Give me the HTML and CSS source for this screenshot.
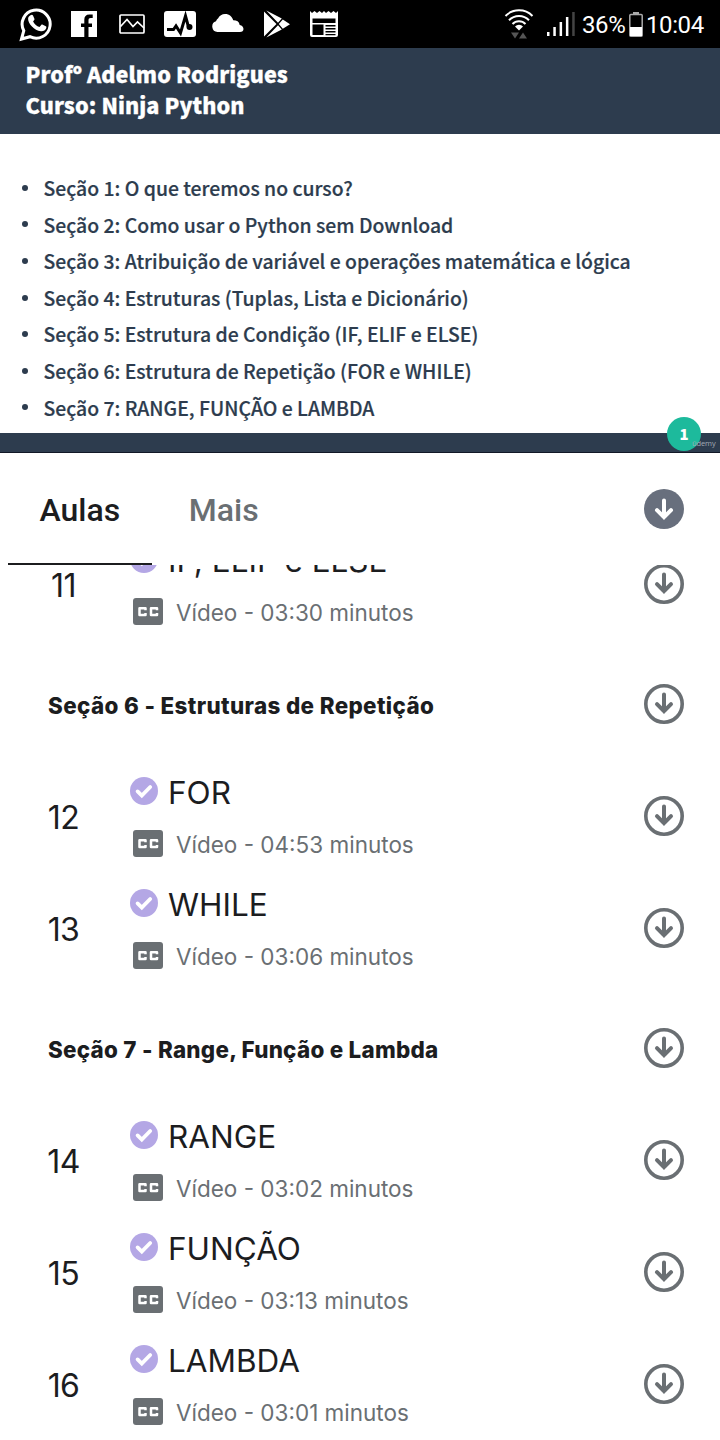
FILE: index.html
```html
<!DOCTYPE html>
<html lang="pt-BR">
<head>
<meta charset="utf-8">
<title>Ninja Python</title>
<link rel="stylesheet" href="styles.css">
</head>
<body>
<svg width="0" height="0" class="defs">
  <defs>
    <symbol id="down" viewBox="0 0 40 40"><circle cx="20" cy="20" r="18.2" fill="none" stroke="#6a6f73" stroke-width="3.6"/><path d="M20 10.500V27M13 20.200l7 7 7-7" fill="none" stroke="#6a6f73" stroke-width="4" stroke-linecap="round"/></symbol>
    <symbol id="check" viewBox="0 0 28 28"><circle cx="14" cy="14" r="14" fill="#b4a7e5"/><path d="M7.600 14.400l4.200 4.200 8.400-8.600" fill="none" stroke="#fff" stroke-width="3.800" stroke-linecap="round"/></symbol>
    <symbol id="cc" viewBox="0 0 30 27"><rect width="30" height="27" rx="3" fill="#6a6f73"/><path d="M12.500 12.300V10.300H6.500v6.800H12.500v-2M24 12.300V10.300H18v6.800H24v-2" fill="none" stroke="#fff" stroke-width="2.500" stroke-linejoin="round"/></symbol>
  </defs>
</svg>
<header class="status">
  <div class="status-icons">
    <svg width="34" height="36" viewBox="0 0 34 36"><path d="M2.500 33l2.300-8.300A14 14 0 1 1 11 30.700z" fill="none" stroke="#fff" stroke-width="3"/><path d="M11.500 9.200c1-.8 2-.7 2.500.3l1.400 3.200c.3.800-.2 1.400-1.300 2.700 1.600 2.900 3.500 4.400 6.400 5.600l1.700-2c.5-.6 1-.6 1.600-.3l3 1.500c.7.400.7.900.4 2-.7 2.300-3.200 3.300-5.300 3-6.700-1-12.800-7.500-12.800-12.300 0-1.500.9-2.800 2.400-3.700z" fill="#fff"/></svg>
    <svg width="26" height="26" viewBox="0 0 26 26"><path fill="#fff" d="M0 0h26v26H17.500V16h3.500v-3.500h-3.500V9.500c0-1.800.6-2.500 2.200-2.500h2V3.500h-3.300c-3.400 0-5.100 2-5.100 5.300V12.500H10V16h3.300V26H0z"/></svg>
    <svg width="26" height="20" viewBox="0 0 26 20"><rect x="1" y="1" width="24" height="18" rx="1" fill="none" stroke="#fff" stroke-width="1.700"/><path d="M1.500 12.500L8 5.500l6 7 4.500-4.500 6.500 6" fill="none" stroke="#fff" stroke-width="1.700"/></svg>
    <svg width="32" height="26" viewBox="0 0 32 26"><rect width="32" height="26" rx="3" fill="#fff"/><path d="M3 18.500h6.500l2.500-3.500 4.500 7 5-17 3 11" fill="none" stroke="#000" stroke-width="3"/><circle cx="25.500" cy="16" r="3"/></svg>
    <svg width="32" height="18" viewBox="0 0 32 18"><path fill="#fff" d="M5.500 18A5.500 5.500 0 0 1 4 7.300C4.800 5.500 5 5 6 4.500 7.500 1.500 10 0 13 0c4.500 0 7 2.500 8.300 6.300 3.500 0 5.900 1.400 6.400 4.700 5 1 5 7 .2 7z"/></svg>
    <svg width="26" height="28" viewBox="0 0 26 28"><path d="M0 1.500L12.500 14 0 26.500zM2.300.5l15.500 8-3.800 4.200zM2.300 27.500l15.500-8-3.800-4.200zM18.800 9.500l7.200 4.700-7.200 4.500-4-4.600z" fill="#fff"/></svg>
    <svg width="28" height="27" viewBox="0 0 28 27"><path fill="#fff" fill-rule="evenodd" d="M0 0l2 2 2.500-2L7 2l2.500-2L12 2l2-2 2 2 2.500-2L21 2l2.500-2L26 2l2-2v24a2 2 0 0 1-2 2H2a2 2 0 0 1-2-2zM2.500 7.500v4.500h23V7.500zM2.500 13.500v10.500H13.500V13.500zM15.500 14v1.500h10V14zM15.500 17v1.500h10V17zM15.500 20v1.500h10V20zM15.500 23v1.200h10V23z"/></svg>
  </div>
  <svg class="wifi" width="30" height="32" viewBox="0 0 30 32"><g fill="none" stroke="#fff" stroke-width="2"><path d="M1.500 8a19 19 0 0 1 27 0M5 12.300a14 14 0 0 1 20 0M8.500 16a9 9 0 0 1 13 0"/></g><path d="M11 18.500a5.500 5.500 0 0 1 8 0L15 22.500z" fill="#fff"/><path d="M7 24.500h8l-4 6zM15 30.500h8l-4-6z" fill="#555"/></svg>
  <svg class="signal" width="28" height="24" viewBox="0 0 28 24"><path d="M0 20h2.500v4H0zM6.300 15h2.500v9H6.300zM12.600 10h2.500v14h-2.500zM18.900 5h2.500v19h-2.500z" fill="#fff"/><path d="M25.200 0h2.500v24h-2.500z" fill="#444"/></svg>
  <span class="pct">36%</span>
  <svg class="battery" width="14" height="25" viewBox="0 0 14 25"><path d="M4 0h6v2H4z" fill="#aaa"/><rect x=".8" y="2.500" width="12.400" height="21.700" rx="1" fill="none" stroke="#aaa" stroke-width="1.500"/><path d="M1 15h12v9H1z" fill="#fff"/></svg>
  <span class="time">10:04</span>
</header>
<section class="slide">
  <div class="slide-head"><div class="l1">Profº Adelmo Rodrigues</div><div class="l2">Curso: Ninja Python</div></div>
  <ul class="topics">
    <li>Seção 1: O que teremos no curso?</li>
    <li>Seção 2: Como usar o Python sem Download</li>
    <li>Seção 3: Atribuição de variável e operações matemática e lógica</li>
    <li>Seção 4: Estruturas (Tuplas, Lista e Dicionário)</li>
    <li>Seção 5: Estrutura de Condição (IF, ELIF e ELSE)</li>
    <li>Seção 6: Estrutura de Repetição (FOR e WHILE)</li>
    <li>Seção 7: RANGE, FUNÇÃO e LAMBDA</li>
  </ul>
  <div class="slide-foot"><span class="page">1</span><span class="brand">ûdemy</span></div>
</section>
<nav class="tabs">
  <div class="tab active"><span>Aulas</span></div>
  <div class="tab"><span>Mais</span></div>
  <svg class="dl-all" width="40" height="40" viewBox="0 0 40 40"><circle cx="20" cy="20" r="20" fill="#686f7d"/><path d="M20 11.500V28M13 21.200l7 7 7-7" fill="none" stroke="#fff" stroke-width="4" stroke-linecap="round"/></svg>
</nav>
<main class="list">
  <div class="scroll">
    <div class="row"><span class="num">11</span><div class="body"><div class="title"><svg class="check"><use href="#check"/></svg><span>IF, ELIF e ELSE</span></div><div class="meta"><svg class="cc"><use href="#cc"/></svg><span>Vídeo - 03:30 minutos</span></div></div><svg class="dl"><use href="#down"/></svg></div>
    <div class="sec"><h2 class="s6">Seção 6 - Estruturas de Repetição</h2><svg class="dl"><use href="#down"/></svg></div>
    <div class="row"><span class="num">12</span><div class="body"><div class="title"><svg class="check"><use href="#check"/></svg><span>FOR</span></div><div class="meta"><svg class="cc"><use href="#cc"/></svg><span>Vídeo - 04:53 minutos</span></div></div><svg class="dl"><use href="#down"/></svg></div>
    <div class="row"><span class="num">13</span><div class="body"><div class="title"><svg class="check"><use href="#check"/></svg><span>WHILE</span></div><div class="meta"><svg class="cc"><use href="#cc"/></svg><span>Vídeo - 03:06 minutos</span></div></div><svg class="dl"><use href="#down"/></svg></div>
    <div class="sec"><h2 class="s7">Seção 7 - Range, Função e Lambda</h2><svg class="dl"><use href="#down"/></svg></div>
    <div class="row"><span class="num">14</span><div class="body"><div class="title"><svg class="check"><use href="#check"/></svg><span>RANGE</span></div><div class="meta"><svg class="cc"><use href="#cc"/></svg><span>Vídeo - 03:02 minutos</span></div></div><svg class="dl"><use href="#down"/></svg></div>
    <div class="row"><span class="num">15</span><div class="body"><div class="title"><svg class="check"><use href="#check"/></svg><span>FUNÇÃO</span></div><div class="meta"><svg class="cc"><use href="#cc"/></svg><span>Vídeo - 03:13 minutos</span></div></div><svg class="dl"><use href="#down"/></svg></div>
    <div class="row"><span class="num">16</span><div class="body"><div class="title"><svg class="check"><use href="#check"/></svg><span>LAMBDA</span></div><div class="meta"><svg class="cc"><use href="#cc"/></svg><span>Vídeo - 03:01 minutos</span></div></div><svg class="dl"><use href="#down"/></svg></div>
  </div>
</main>
</body>
</html>
```
FILE: styles.css
```css
* { box-sizing: border-box; }
body { margin: 0; width: 720px; height: 1440px; overflow: hidden; background: #fff; color: #1c1d1f; font-family: Inter, sans-serif; display: flex; flex-direction: column; }
svg { display: block; flex: none; }
.defs { position: absolute; }
span, h2 { white-space: nowrap; }

.status { height: 48px; flex: none; background: #000; color: #fff; display: flex; align-items: center; padding: 0 15px 0 19px; font: 24px/48px Roboto, sans-serif; }
.status-icons { display: flex; align-items: center; flex: 1; }
.status-icons svg:nth-child(1) { margin: -1px 18px 0 0; }
.status-icons svg:nth-child(2) { margin-right: 22px; }
.status-icons svg:nth-child(3) { margin-right: 19px; }
.status-icons svg:nth-child(4) { margin-right: 16px; }
.status-icons svg:nth-child(5) { margin: -2px 20px 0 0; }
.status-icons svg:nth-child(6) { margin-right: 20px; }
.wifi { margin-right: 13px; }
.signal { margin-right: 7px; }
.pct { width: 46px; letter-spacing: -0.4px; padding-top: 2px; }
.battery { margin: 0 3px 0 1px; }
.time { padding-top: 2px; width: 59px; letter-spacing: -0.4px; }

.slide { flex: none; height: 405px; display: flex; flex-direction: column; color: #2d3c4e; font-family: "Noto Sans CJK SC", sans-serif; }
.slide-head { height: 86px; flex: none; background: #2d3c4e; color: #fff; padding: 10px 25px 0 25.5px; font-weight: 900; font-size: 21.6px; line-height: 31px; letter-spacing: 0.08px; white-space: nowrap; -webkit-text-stroke: 0.3px #fff; }
.topics { flex: 1; list-style: none; margin: 0; padding: 36px 0 0 22px; font-size: 19.400px; font-weight: 500; line-height: 36.600px; white-space: nowrap; -webkit-text-stroke: 0.2px #2d3c4e; }
.topics li { display: flex; align-items: center; gap: 15.500px; }
.topics li::before { content: ""; width: 6px; height: 6px; border-radius: 50%; background: #2d3c4e; flex: none; margin-top: -1px; }
.slide-foot { position: relative; height: 20px; flex: none; background: #2d3c4e; border-bottom: 1px solid #111827; }
.page { position: absolute; left: 667px; top: -16.500px; width: 34px; height: 34px; border-radius: 50%; background: #1dba9c; color: #fff; text-align: center; font-size: 15px; font-weight: 900; line-height: 33px; }
.brand { position: absolute; left: 692px; top: 5px; font: 7.500px/10px "Open Sans", sans-serif; letter-spacing: -0.1px; color: #a3abb5; }

.tabs { height: 112px; flex: none; display: flex; padding-left: 8px; font: 500 32px/38px Roboto, sans-serif; color: #6a6f73; }
.tab { height: 112px; width: 144px; padding-top: 38px; text-align: center; }
.tab span { margin-left: -0.5px; }
.tab.active { color: #1c1d1f; border-bottom: 2px solid #1c1d1f; }
.dl-all { margin: 36px 36px 0 auto; }

.list { flex: 1; overflow: hidden; }
.scroll { margin-top: -37px; }
.row { height: 112px; display: flex; align-items: center; padding-right: 36px; }
.num { width: 127px; padding: 3px 0 0 0; text-align: center; font-size: 32px; letter-spacing: -0.6px; }
.body { flex: 1; margin-left: 3px; height: 112px; padding-top: 13px; }
.title { display: flex; align-items: center; gap: 10px; height: 40px; font-size: 31.500px; line-height: 40px; }
.title span { padding-top: 0; }
.check { width: 28px; height: 28px; margin-top: -4px; }
.meta { display: flex; align-items: center; gap: 13px; margin: 18px 0 0 3px; height: 28px; font-size: 22.500px; line-height: 28px; color: #6a6f73; }
.cc { width: 30px; height: 27px; margin-top: -4px; }
.dl { width: 40px; height: 40px; }
.sec { height: 120px; display: flex; align-items: center; justify-content: space-between; padding: 8px 36px 0 48px; }
h2 { margin: 4px 0 0; font-size: 22.400px; font-weight: 800; line-height: 30px; }
.s6 { letter-spacing: 0.370px; }
.s7 { letter-spacing: 0.270px; }
```
